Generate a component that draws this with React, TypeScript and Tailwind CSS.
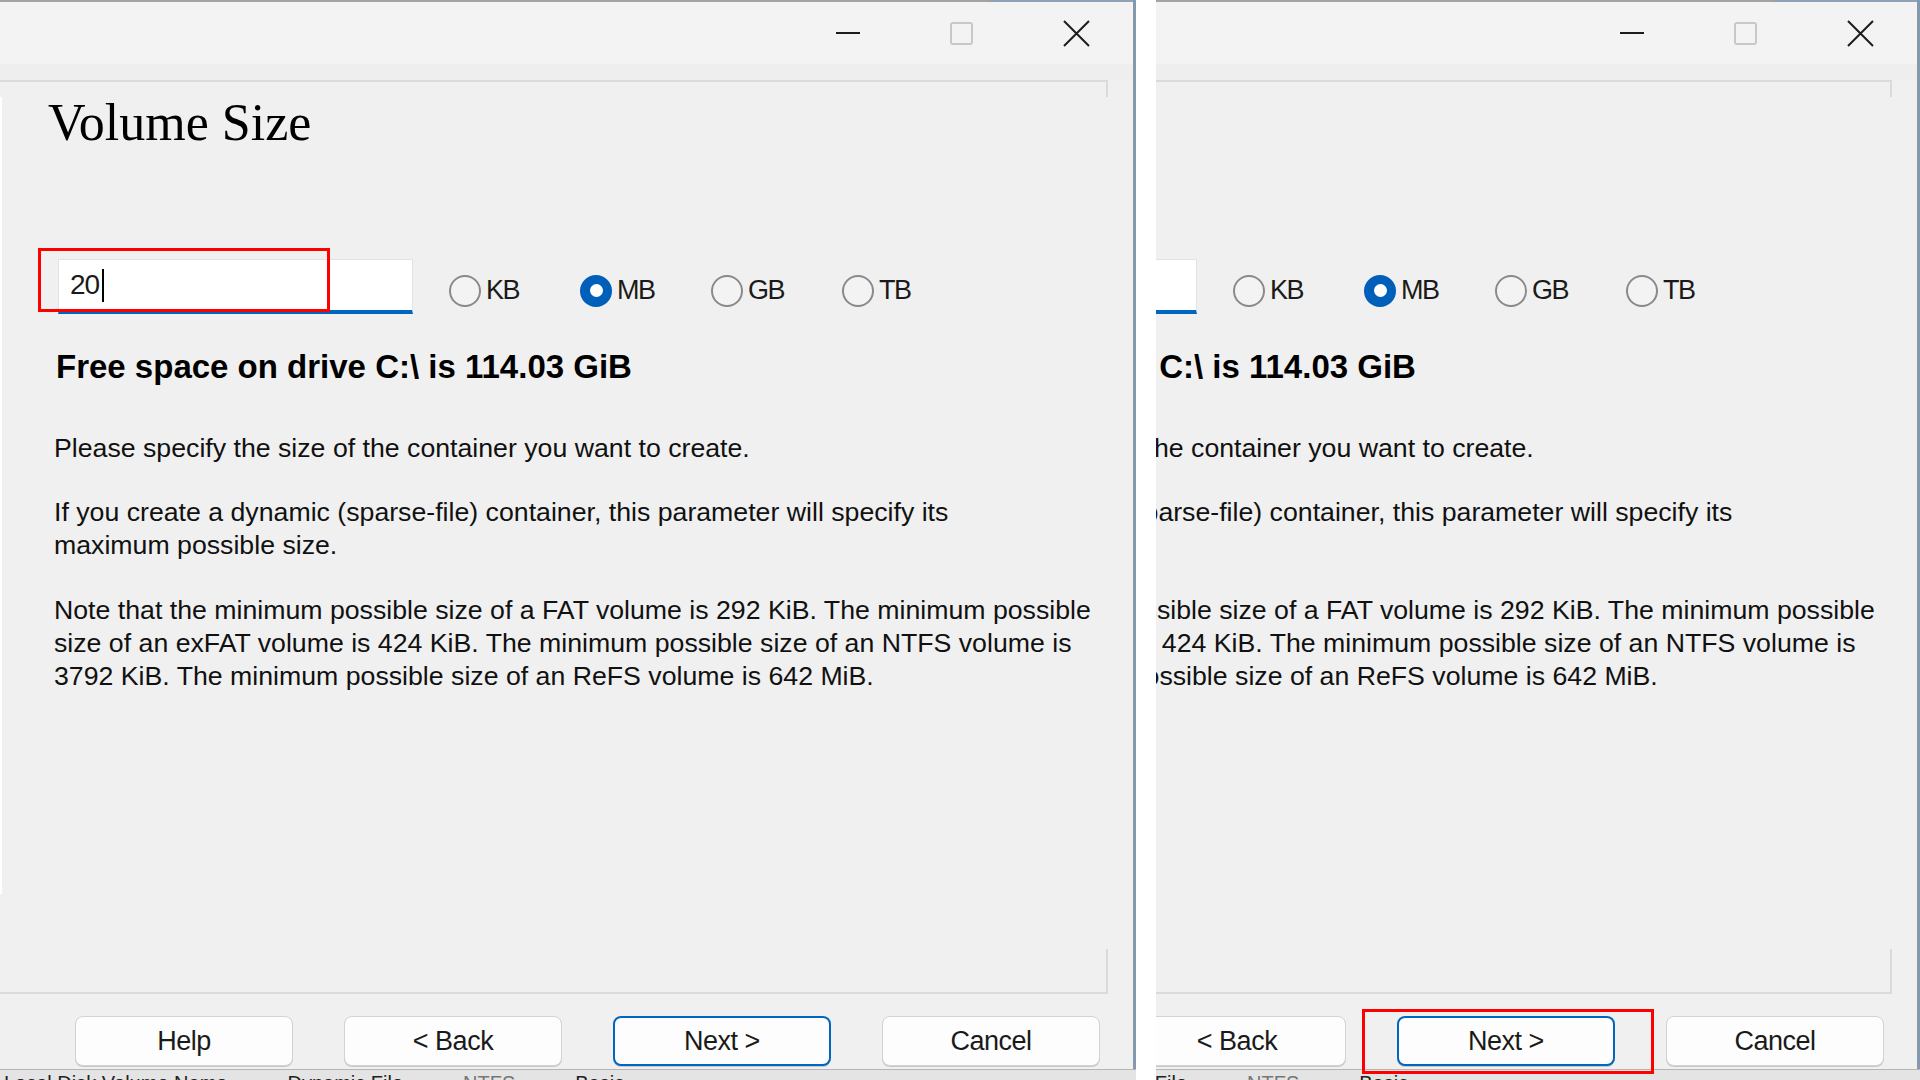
import React from "react";

type Mark = "input" | "next";

const UNITS = [
  { key: "kb", label: "KB", checked: false },
  { key: "mb", label: "MB", checked: true },
  { key: "gb", label: "GB", checked: false },
  { key: "tb", label: "TB", checked: false },
];

const BUTTONS = [
  { key: "help", label: "Help", primary: false },
  { key: "back", label: "< Back", primary: false },
  { key: "next", label: "Next >", primary: true },
  { key: "cancel", label: "Cancel", primary: false },
];

function Radio({ label, checked }: { label: string; checked: boolean }) {
  return (
    <div className="flex w-[131px] shrink-0 items-center gap-[5px]">
      {checked ? (
        <span className="flex h-[32px] w-[32px] items-center justify-center rounded-full bg-[#005fb8]">
          <span className="h-[13px] w-[13px] rounded-full bg-white" />
        </span>
      ) : (
        <span className="h-[32px] w-[32px] rounded-full border-2 border-[#8a8a8a] bg-[#f3f3f3]" />
      )}
      <span className="text-[27px] leading-none tracking-[-1.5px] text-[#1a1a1a]">{label}</span>
    </div>
  );
}

function CaptionButtons() {
  return (
    <div className="flex h-full">
      <div className="flex w-[110px] items-center justify-center">
        <span className="h-[2px] w-[24px] bg-[#1c1c1c]" />
      </div>
      <div className="flex w-[116px] items-center justify-center">
        <span className="h-[23px] w-[23px] rounded-[3px] border-2 border-[#c8c8c8]" />
      </div>
      <div className="flex w-[114px] items-center justify-center">
        <svg width="27" height="27" viewBox="0 0 27 27" fill="none" stroke="#1c1c1c" strokeWidth="2">
          <path d="M1 1 L26 26 M26 1 L1 26" />
        </svg>
      </div>
    </div>
  );
}

function Dialog({ mark }: { mark: Mark }) {
  return (
    <div className="flex h-[1080px] w-[1136px] shrink-0 flex-col bg-[#f0f0f0] font-['Liberation_Sans',Arial,sans-serif] text-black">
      <div className="flex h-[1069px] flex-col border-r-[3px] border-[#8599ad]">
        {/* window top edge */}
        <div className="flex h-[2px] shrink-0">
          <div className="w-[990px] bg-[#a3a3a3]" />
          <div className="flex-1 bg-[#8fa3b6]" />
        </div>

        {/* title bar */}
        <div className="flex h-[62px] shrink-0 justify-end bg-[#f3f3f3]">
          <CaptionButtons />
        </div>
        <div className="h-[16px] shrink-0 bg-[#eeeeee]" />

        {/* page frame */}
        <div className="flex w-[1108px] flex-col">
          <div className="h-[17px] border-t-2 border-r-2 border-[#dadada]" />

          <div className="flex h-[852px]">
            <div className="h-[797px] w-[2px] shrink-0 bg-white" />
            <div className="flex flex-1 flex-col">
              <h1 className="mt-[1px] pl-[46px] font-['Liberation_Serif','Times_New_Roman',serif] text-[52px] leading-[50px] font-normal">
                Volume Size
              </h1>

              <div className="mt-[111px] flex h-[55px] items-center">
                <div className="relative ml-[56px] flex h-[55px] w-[355px] items-center border border-b-[4px] border-[#e2e2e2] border-b-[#0067c0] bg-white pl-[11px]">
                  <span className="text-[28px] leading-none tracking-[-1px] text-[#1a1a1a]">20</span>
                  <span className="ml-[3px] h-[33px] w-[2px] bg-black" />
                  {mark === "input" && (
                    <div className="absolute left-[-21px] top-[-12px] h-[64px] w-[292px] border-[3px] border-[#ff0000]" />
                  )}
                </div>
                <div className="ml-[36px] flex pt-[8px]">
                  {UNITS.map((u) => (
                    <Radio key={u.key} label={u.label} checked={u.checked} />
                  ))}
                </div>
              </div>

              <p className="mt-[33px] pl-[54px] text-[33px] leading-[40px] font-bold whitespace-nowrap">
                Free space on drive C:\ is 114.03 GiB
              </p>

              <div className="mt-[45px] pl-[52px] text-[26.7px] leading-[33px] whitespace-nowrap text-[#111]">
                <p>Please specify the size of the container you want to create.</p>
                <p className="mt-[31px]">
                  If you create a dynamic (sparse-file) container, this parameter will specify its
                  <br />
                  maximum possible size.
                </p>
                <p className="mt-[32px]">
                  Note that the minimum possible size of a FAT volume is 292 KiB. The minimum possible
                  <br />
                  size of an exFAT volume is 424 KiB. The minimum possible size of an NTFS volume is
                  <br />
                  3792 KiB. The minimum possible size of an ReFS volume is 642 MiB.
                </p>
              </div>
            </div>
          </div>

          <div className="h-[45px] border-r-2 border-b-2 border-[#dadada]" />
        </div>

        {/* buttons */}
        <div className="mt-[22px] flex gap-[51px] pl-[75px]">
          {BUTTONS.map((b) => (
            <div key={b.key} className="relative">
              <button
                className={`flex h-[50px] w-[218px] items-center justify-center rounded-[8px] bg-[#fdfdfd] text-[27px] leading-none tracking-[-0.5px] text-[#1a1a1a] shadow-[0_1px_0_#c8c8c8] ${
                  b.primary ? "border-2 border-[#0067c0]" : "border border-[#d3d3d3]"
                }`}
              >
                {b.label}
              </button>
              {b.primary && mark === "next" && (
                <div className="absolute left-[-35px] top-[-7px] h-[65px] w-[292px] border-[3px] border-[#ff0000]" />
              )}
            </div>
          ))}
        </div>
      </div>

      {/* desktop strip under the window */}
      <div className="flex h-[11px] items-start gap-[60px] overflow-hidden border-t border-[#b5b5b5] bg-[#e4e4e4] pl-[4px] text-[20px] leading-[20px] text-[#222]">
        <span className="mt-[3px] whitespace-nowrap">Local Disk Volume Name</span>
        <span className="mt-[3px] whitespace-nowrap">Dynamic File</span>
        <span className="mt-[3px] whitespace-nowrap text-[#777]">NTFS</span>
        <span className="mt-[3px] whitespace-nowrap">Basic</span>
      </div>
    </div>
  );
}

export default function App() {
  return (
    <div className="flex h-[1080px] w-[1920px] overflow-hidden bg-white">
      <Dialog mark="input" />
      <div className="w-[20px] shrink-0 bg-white" />
      <div className="h-[1080px] w-[764px] shrink-0 overflow-hidden">
        <div className="ml-[-372px] w-[1136px]">
          <Dialog mark="next" />
        </div>
      </div>
    </div>
  );
}
